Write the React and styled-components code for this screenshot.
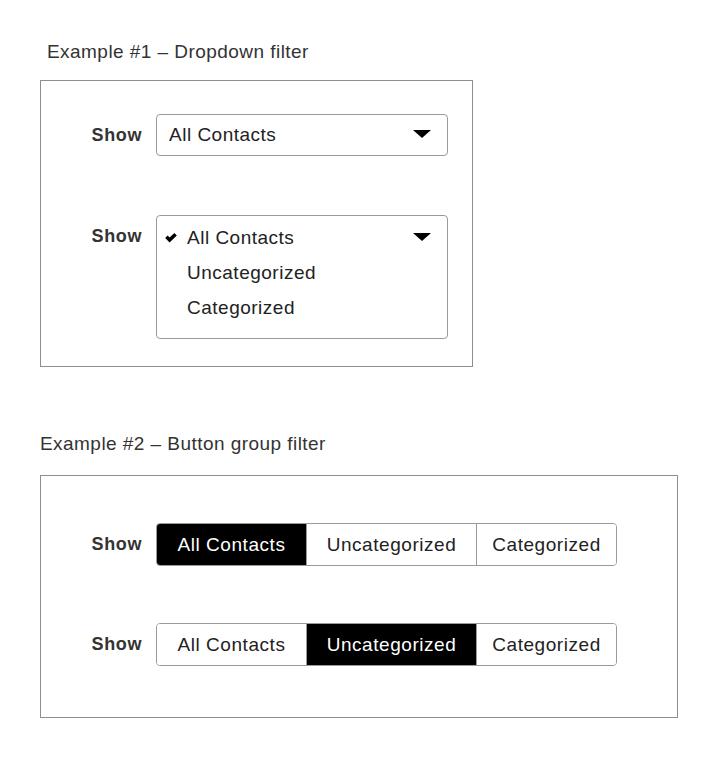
import React, { useState } from "react";
import styled, { createGlobalStyle } from "styled-components";

const GlobalStyle = createGlobalStyle`
  body {
    margin: 0;
    background: #fff;
    font-family: "Liberation Sans", Arial, sans-serif;
    color: #222;
  }
`;

// Seite
const Page = styled.div`
  padding: 41px 0 0 40px;
`;

const Title = styled.div`
  font-size: 19px;
  letter-spacing: 0.45px;
  line-height: 22px;
  color: #333;
  padding-left: ${(p) => p.$indent || 0}px;
  margin-bottom: ${(p) => p.$bottom}px;
`;

// Rahmen um ein Beispiel
const Frame = styled.div`
  box-sizing: border-box;
  width: ${(p) => p.$width}px;
  border: 1px solid #8e8e8e;
  padding: ${(p) => p.$pad};
  margin-bottom: ${(p) => p.$bottom || 0}px;
  display: flex;
  flex-direction: column;
  gap: ${(p) => p.$gap}px;
`;

const Row = styled.div`
  display: flex;
  align-items: flex-start;
  gap: 14px;
`;

const Label = styled.div`
  width: 52px;
  text-align: right;
  font-size: 18px;
  font-weight: bold;
  letter-spacing: 0.6px;
  line-height: 42px;
  color: #333;
`;

// Dropdown
const Select = styled.div`
  box-sizing: border-box;
  width: 292px;
  min-height: 42px;
  border: 1px solid #9a9a9a;
  border-radius: 4px;
  position: relative;
  padding: ${(p) => (p.$open ? "4px 0 13px 8px" : "0 0 0 12px")};
  font-size: 19px;
  letter-spacing: 0.5px;
  line-height: ${(p) => (p.$open ? "35px" : "40px")};
  color: #222;
`;

const Caret = styled.svg`
  position: absolute;
  right: 16px;
  top: ${(p) => p.$top}px;
`;

const Option = styled.div`
  display: flex;
  align-items: center;
`;

const CheckCol = styled.span`
  width: 22px;
  display: flex;
  align-items: center;
`;

// Button-Gruppe
const Group = styled.div`
  display: flex;
  height: 43px;
  box-sizing: border-box;
  border: 1px solid #9a9a9a;
  border-radius: 4px;
  overflow: hidden;
`;

const Segment = styled.button`
  box-sizing: border-box;
  width: ${(p) => p.$w}px;
  border: none;
  border-left: ${(p) => (p.$first ? "none" : "1px solid #9a9a9a")};
  margin: ${(p) => (p.$active ? "-1px 0" : "0")};
  height: ${(p) => (p.$active ? "43px" : "41px")};
  background: ${(p) => (p.$active ? "#000" : "#fff")};
  color: ${(p) => (p.$active ? "#fff" : "#222")};
  font-family: inherit;
  font-size: 19px;
  letter-spacing: 0.55px;
  padding: 0;
  cursor: pointer;
`;

const options = [
  { label: "All Contacts", w: 149 },
  { label: "Uncategorized", w: 170 },
  { label: "Categorized", w: 140 },
];

const CaretIcon = ({ top }) => (
  <Caret $top={top} width="18" height="8" viewBox="0 0 18 8">
    <polygon points="0,0 18,0 9,8" fill="#000" />
  </Caret>
);

const Check = () => (
  <svg width="12" height="10" viewBox="0 0 12 10">
    <path d="M0.2 5 L2.6 2.6 L4.6 4.6 L9.4 0 L11.8 2.4 L4.6 9.4 Z" fill="#000" />
  </svg>
);

const ButtonGroup = ({ initial }) => {
  const [active, setActive] = useState(initial);
  return (
    <Group>
      {options.map((o, i) => (
        <Segment
          key={o.label}
          $w={o.w}
          $first={i === 0}
          $active={active === i}
          onClick={() => setActive(i)}
        >
          {o.label}
        </Segment>
      ))}
    </Group>
  );
};

const App = () => {
  return (
    <Page>
      <GlobalStyle />
      <Title $indent={7} $bottom={17}>Example #1 – Dropdown filter</Title>
      <Frame $width={433} $pad="33px 0 27px 49px" $gap={59} $bottom={66}>
        <Row>
          <Label>Show</Label>
          <Select>
            All Contacts
            <CaretIcon top={15} />
          </Select>
        </Row>
        <Row>
          <Label>Show</Label>
          <Select $open>
            {options.map((o, i) => (
              <Option key={o.label}>
                <CheckCol>{i === 0 && <Check />}</CheckCol>
                {o.label}
              </Option>
            ))}
            <CaretIcon top={17} />
          </Select>
        </Row>
      </Frame>

      <Title $bottom={20}>Example #2 – Button group filter</Title>
      <Frame $width={638} $pad="47px 0 51px 49px" $gap={57}>
        <Row>
          <Label>Show</Label>
          <ButtonGroup initial={0} />
        </Row>
        <Row>
          <Label>Show</Label>
          <ButtonGroup initial={1} />
        </Row>
      </Frame>
    </Page>
  );
};

export default App;
